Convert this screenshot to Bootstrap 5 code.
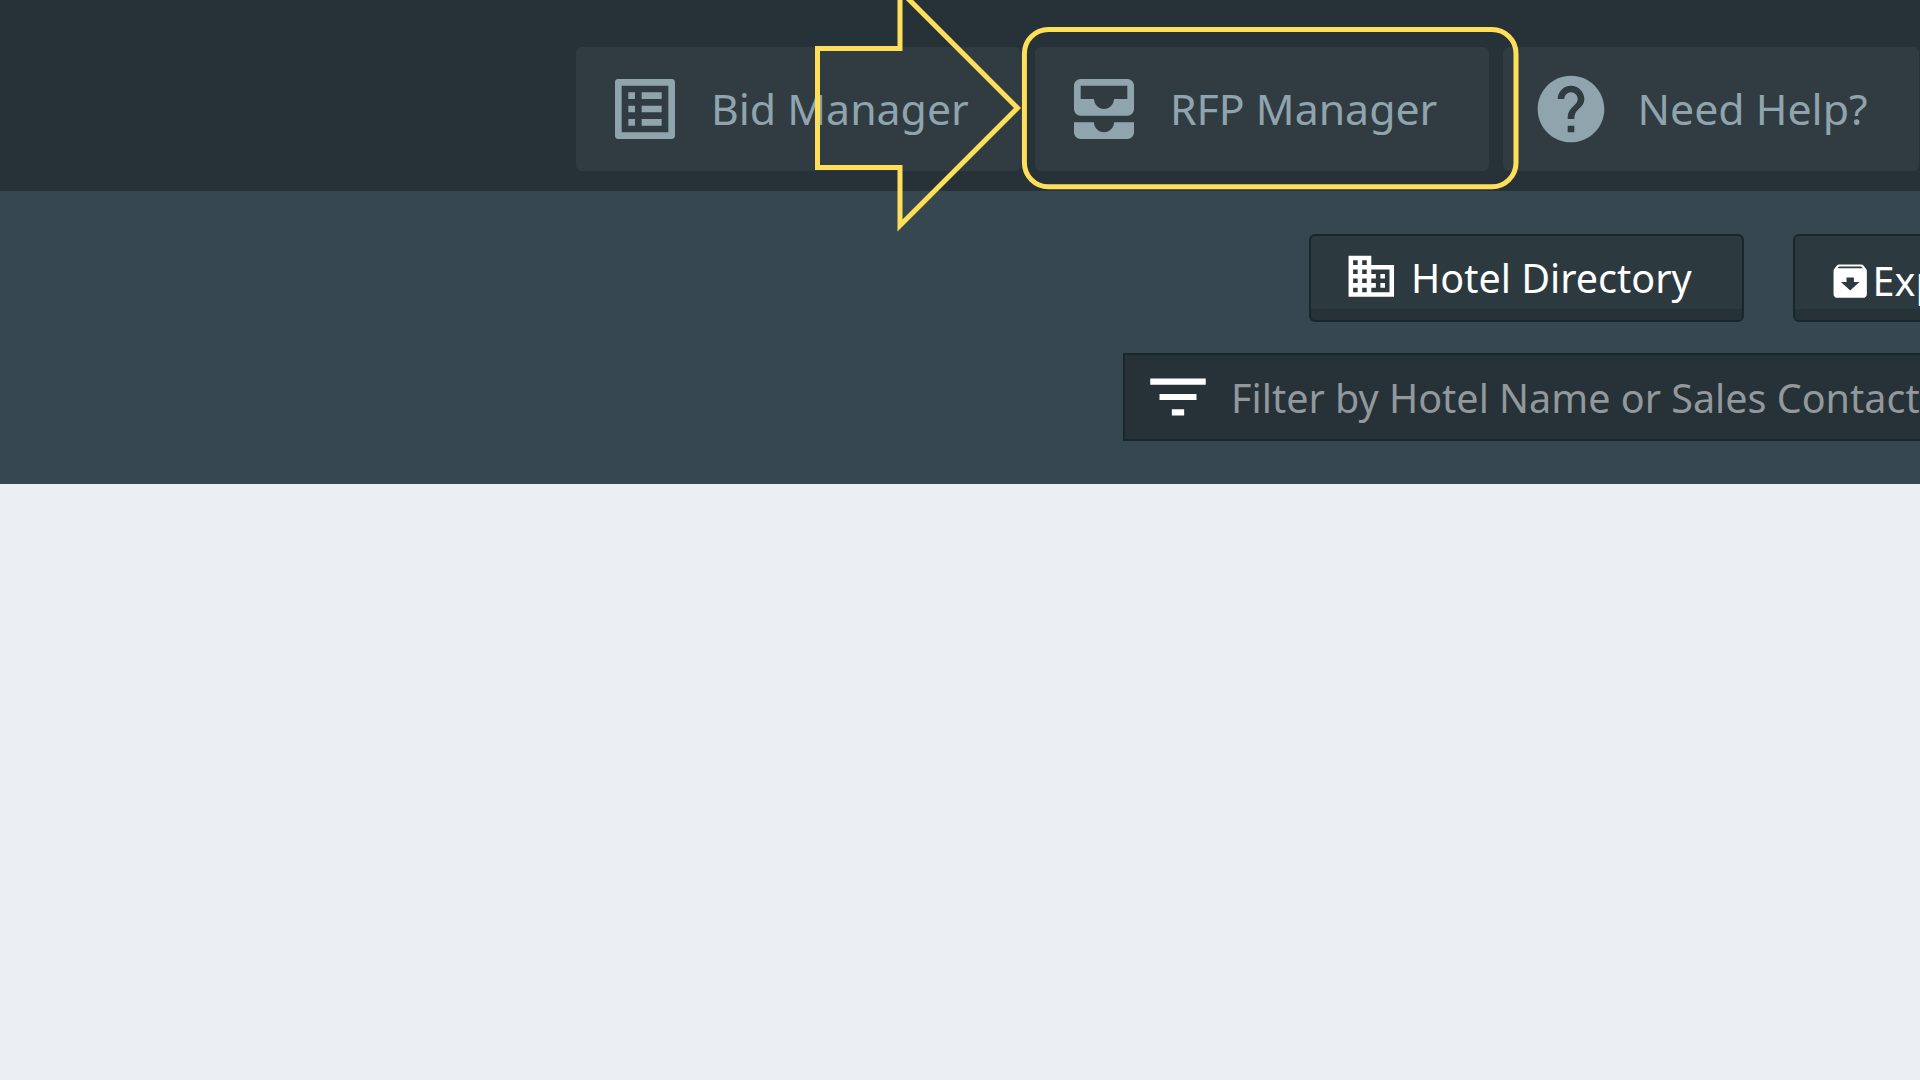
<!DOCTYPE html>
<html lang="en">
<head>
    <meta charset="UTF-8">
    <meta name="viewport" content="width=device-width, initial-scale=1.0">
    <title>RFP Manager</title>
    <!-- Bootstrap CDN -->
    <link href="https://cdn.jsdelivr.net/npm/bootstrap@5.3.0/dist/css/bootstrap.min.css" rel="stylesheet">
    <style>
        body {
            background-color: #ebeff2;
            font-family: "Noto Sans", sans-serif;
            color: #fff;
        }

        svg {
            display: block;
            flex-shrink: 0;
            fill: currentColor;
        }

        /* Top bar */
        .top-bar {
            height: 190.5px;
            padding: 47px 1px 0 0;
            background-color: #263238;
        }

        .top-tabs {
            gap: 14px;
        }

        .top-tab {
            height: 124px;
            padding: 0 0 0 28.5px;
            border-radius: 6px;
            background-color: #313c42;
            color: #90a4ae;
            font-size: 42.8px;
            line-height: 60px;
        }

        .top-tab:hover {
            color: #90a4ae;
        }

        .top-tab svg {
            width: 80px;
            height: 80px;
            margin-right: 26.5px;
        }

        .tab-bid {
            width: 445px;
        }

        .tab-rfp {
            width: 453.5px;
        }

        .tab-help {
            width: 416.5px;
        }

        /* Tool bar */
        .tool-bar {
            height: 293.5px;
            padding-top: 43.5px;
            background-color: #37474f;
        }

        .tool-buttons {
            gap: 49px;
            padding-left: 1309px;
            margin-bottom: 30.5px;
        }

        .tool-btn {
            height: 88px;
            border: 2.5px solid #17272c;
            border-radius: 6px;
            background: linear-gradient(#2c393f 0, #2c393f 73px, #263238 73px);
            color: #fff;
            font-size: 39.5px;
            line-height: 54px;
            flex-shrink: 0;
        }

        .btn-directory {
            width: 435px;
            padding: 0 0 1px 33px;
        }

        .btn-directory svg {
            width: 54.6px;
            height: 54.6px;
            margin: 0 12.5px 2px 0;
        }

        .btn-export {
            width: 300px;
            padding: 6px 0 0 33.2px;
        }

        .btn-export svg {
            width: 44.4px;
            height: 44.4px;
        }

        .filter-box {
            height: 88px;
            margin-left: 1123px;
            padding-left: 16px;
            border: 2.5px solid #17272c;
            border-right: 0;
            background-color: #263238;
        }

        .filter-box svg {
            width: 74px;
            height: 74px;
            margin-right: 16px;
        }

        .filter-box input {
            padding: 3px 0 0;
            border: 0;
            outline: 0;
            background: none;
            color: #fff;
            font-size: 39.5px;
            line-height: 54px;
        }

        .filter-box input::placeholder {
            color: #92989b;
            opacity: 1;
        }

        /* Callout drawn over the tabs */
        .callout {
            top: 0;
            left: 815px;
            fill: none;
            stroke: #ffde59;
            stroke-width: 5;
            pointer-events: none;
        }
    </style>
</head>
<body class="position-relative overflow-hidden">
    <!-- Top Bar -->
    <header class="top-bar">
        <nav class="top-tabs d-flex justify-content-end">
            <a class="top-tab tab-bid d-flex align-items-center text-decoration-none text-nowrap" href="#">
                <svg viewBox="0 0 24 24"><path d="M19 5v14H5V5h14m1.1-2H3.9c-.5 0-.9.4-.9.9v16.2c0 .4.4.9.9.9h16.2c.4 0 .9-.5.9-.9V3.9c0-.5-.5-.9-.9-.9zM11 7h6v2h-6V7zm0 4h6v2h-6v-2zm0 4h6v2h-6zM7 7h2v2H7zm0 4h2v2H7zm0 4h2v2H7z"/></svg>
                <span>Bid Manager</span>
            </a>
            <a class="top-tab tab-rfp d-flex align-items-center text-decoration-none text-nowrap" href="#">
                <svg viewBox="0 0 24 24"><path d="M19 3H5c-1.100 0-2 .9-2 2v7c0 1.100.9 2 2 2h14c1.100 0 2-.9 2-2V5c0-1.100-.9-2-2-2zm0 6h-4c0 1.620-1.380 3-3 3s-3-1.380-3-3H5V5h14v4zM15 16h6v3c0 1.100-.9 2-2 2H5c-1.100 0-2-.9-2-2v-3h6c0 1.660 1.340 3 3 3s3-1.340 3-3z"/></svg>
                <span>RFP Manager</span>
            </a>
            <a class="top-tab tab-help d-flex align-items-center text-decoration-none text-nowrap" href="#">
                <svg viewBox="0 0 24 24"><path d="M12 2C6.480 2 2 6.480 2 12s4.480 10 10 10 10-4.480 10-10S17.520 2 12 2zm1 17h-2v-2h2v2zm2.070-7.750l-.9.920C13.450 12.900 13 13.500 13 15h-2v-.5c0-1.100.450-2.100 1.170-2.830l1.240-1.260c.370-.360.590-.860.590-1.410 0-1.100-.9-2-2-2s-2 .9-2 2H8c0-2.210 1.790-4 4-4s4 1.790 4 4c0 .880-.360 1.680-.930 2.250z"/></svg>
                <span>Need Help?</span>
            </a>
        </nav>
    </header>

    <!-- Tool Bar -->
    <section class="tool-bar overflow-hidden">
        <div class="tool-buttons d-flex">
            <button class="tool-btn btn-directory d-flex align-items-center text-nowrap" type="button">
                <svg viewBox="0 0 24 24"><path d="M12 7V3H2v18h20V7H12zM6 19H4v-2h2v2zm0-4H4v-2h2v2zm0-4H4V9h2v2zm0-4H4V5h2v2zm4 12H8v-2h2v2zm0-4H8v-2h2v2zm0-4H8V9h2v2zm0-4H8V5h2v2zm10 12h-8v-2h2v-2h-2v-2h2v-2h-2V9h8v10zm-2-8h-2v2h2v-2zm0 4h-2v2h2v-2z"/></svg>
                <span>Hotel Directory</span>
            </button>
            <button class="tool-btn btn-export d-flex align-items-center text-nowrap" type="button">
                <svg viewBox="0 0 24 24"><path d="M20.540 5.230l-1.390-1.680C18.880 3.210 18.470 3 18 3H6c-.470 0-.880.210-1.160.550L3.460 5.230C3.170 5.570 3 6.020 3 6.500V19c0 1.100.9 2 2 2h14c1.100 0 2-.9 2-2V6.500c0-.480-.170-.930-.460-1.270zM12 17l-5-4.500h3V10h4v2.500h3L12 17zM5.120 5l.810-1h12l.940 1H5.120z"/></svg>
                <span>Export</span>
            </button>
        </div>
        <div class="filter-box d-flex align-items-center">
            <svg viewBox="0 0 24 24"><path d="M10 18h4v-2h-4v2zM3 6v2h18V6H3zm3 7h12v-2H6v2z"/></svg>
            <input class="flex-grow-1" type="text" placeholder="Filter by Hotel Name or Sales Contact" aria-label="Filter">
        </div>
    </section>

    <!-- Callout -->
    <svg class="callout position-absolute" width="706" height="236" viewBox="815 0 706 236">
        <path d="M817.500 48.500H900V-9.500L1017.500 108 900 225.500V167.500H817.500z"/>
        <rect x="1024.400" y="29.500" width="491.600" height="157.300" rx="24"/>
    </svg>

    <!-- Bootstrap JS and Popper.js -->
    <script src="https://cdn.jsdelivr.net/npm/bootstrap@5.3.0/dist/js/bootstrap.bundle.min.js"></script>
</body>
</html>
